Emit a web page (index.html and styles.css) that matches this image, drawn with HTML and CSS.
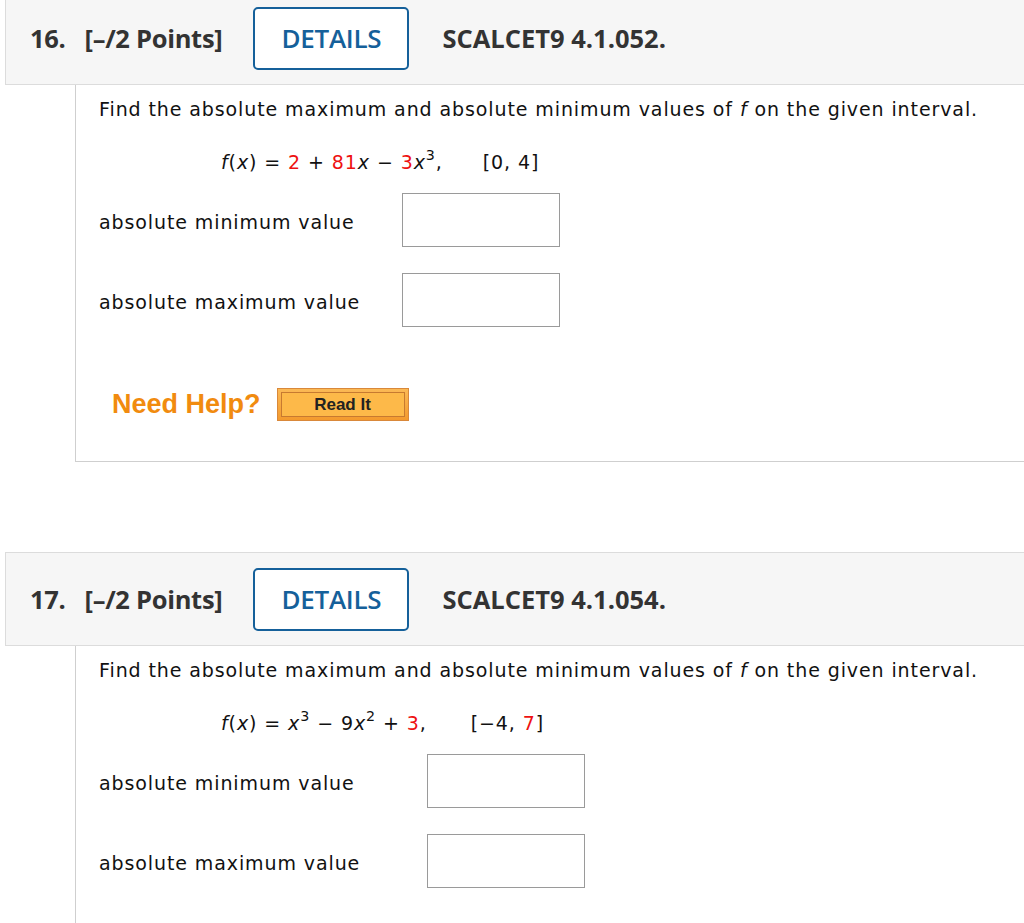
FILE: index.html
```html
<!DOCTYPE html>
<html>
<head>
<meta charset="utf-8">
<link rel="stylesheet" href="styles.css">
</head>
<body>
<div class="page">
  <section class="question first">
    <div class="qhead">
      <span class="qnum">16.</span>
      <span class="qpts">[–/2 Points]</span>
      <button class="details">DETAILS</button>
      <span class="qcode">SCALCET9 4.1.052.</span>
    </div>
    <div class="qbody">
      <p class="prompt">Find the absolute maximum and absolute minimum values of <i>f</i> on the given interval.</p>
      <p class="eq"><i>f</i>(<i>x</i>) = <span class="red">2</span> + <span class="red">81</span><i>x</i> − <span class="red">3</span><i>x</i><sup>3</sup>,<span class="gap"></span>[0, 4]</p>
      <div class="row"><span class="label l1">absolute minimum value</span><span class="box"></span></div>
      <div class="row"><span class="label l1">absolute maximum value</span><span class="box"></span></div>
      <div class="help">
        <span class="needhelp">Need Help?</span>
        <span class="readit"><span class="readit-inner">Read It</span></span>
      </div>
    </div>
  </section>
  <section class="question second">
    <div class="qhead">
      <span class="qnum">17.</span>
      <span class="qpts">[–/2 Points]</span>
      <button class="details">DETAILS</button>
      <span class="qcode">SCALCET9 4.1.054.</span>
    </div>
    <div class="qbody">
      <p class="prompt">Find the absolute maximum and absolute minimum values of <i>f</i> on the given interval.</p>
      <p class="eq"><i>f</i>(<i>x</i>) = <i>x</i><sup>3</sup> − 9<i>x</i><sup>2</sup> + <span class="red">3</span>,<span class="gap wide"></span>[−4, <span class="red">7</span>]</p>
      <div class="row"><span class="label l2">absolute minimum value</span><span class="box"></span></div>
      <div class="row"><span class="label l2">absolute maximum value</span><span class="box"></span></div>
    </div>
  </section>
</div>
</body>
</html>
```
FILE: styles.css
```css
html, body {
  margin: 0;
  padding: 0;
  background: #fff;
  overflow: hidden;
}
.page {
  margin-top: -9px;
  padding-left: 5px;
}
.question.second {
  margin-top: 90px;
}
.qhead {
  height: 92px;
  box-sizing: content-box;
  background: #f6f6f6;
  border: 1px solid #dcdcdc;
  border-right: none;
  display: flex;
  align-items: center;
  padding-left: 24px;
  font-family: "Open Sans", sans-serif;
  font-weight: 700;
  font-size: 25.5px;
  letter-spacing: -0.3px;
  color: #333;
}
.qnum { margin-right: 19px; }
.qpts { margin-right: 31px; }
.qcode { letter-spacing: 0; }
.details {
  width: 156px;
  height: 63px;
  box-sizing: border-box;
  border: 2px solid #15609a;
  border-radius: 5px;
  background: #fff;
  color: #15609a;
  font-family: "Open Sans", sans-serif;
  font-weight: 600;
  font-size: 26px;
  letter-spacing: -0.3px;
  padding: 0;
  margin-right: 33px;
}
.qbody {
  margin-left: 70px;
  border-left: 1px solid #cfcfcf;
  padding-left: 23px;
  font-family: "DejaVu Sans", sans-serif;
  font-size: 19px;
  letter-spacing: 0.9px;
  color: #111;
}
.first .qbody {
  border-bottom: 1px solid #cfcfcf;
  height: 376px;
}
.second .qbody {
  height: 400px;
}
.prompt {
  margin: 0;
  padding-top: 12px;
  line-height: 24px;
}
.eq {
  margin: 29px 0 0 122px;
  line-height: 24px;
}
.eq sup {
  font-size: 0.75em;
  line-height: 0;
  vertical-align: 0.6em;
}
.red { color: #ee1111; }
.gap { display: inline-block; width: 40px; }
.gap.wide { width: 44px; }
.row {
  display: flex;
  align-items: center;
  margin-top: 19px;
  height: 54px;
}
.row + .row { margin-top: 26px; }
.label { display: inline-block; padding-top: 4px; }
.label.l1 { width: 303px; }
.label.l2 { width: 328px; }
.box {
  width: 158px;
  height: 54px;
  box-sizing: border-box;
  border: 1px solid #9a9a9a;
  background: #fff;
}
.help {
  display: flex;
  align-items: center;
  margin-top: 61px;
  padding-left: 13px;
  letter-spacing: 0;
}
.needhelp {
  font-family: "Liberation Sans", Arial, sans-serif;
  font-weight: bold;
  font-size: 27px;
  color: #f18b0f;
  margin-right: 16px;
}
.readit {
  width: 132px;
  height: 33px;
  box-sizing: border-box;
  border: 1px solid #d9883a;
  background: linear-gradient(#fbb955, #f39a2e);
  padding: 3px;
  display: flex;
}
.readit-inner {
  flex: 1;
  border: 1px solid #c77a30;
  background: #fdb949;
  display: flex;
  align-items: center;
  justify-content: center;
  font-family: "Liberation Sans", Arial, sans-serif;
  font-weight: bold;
  font-size: 17px;
  color: #222;
}
```
